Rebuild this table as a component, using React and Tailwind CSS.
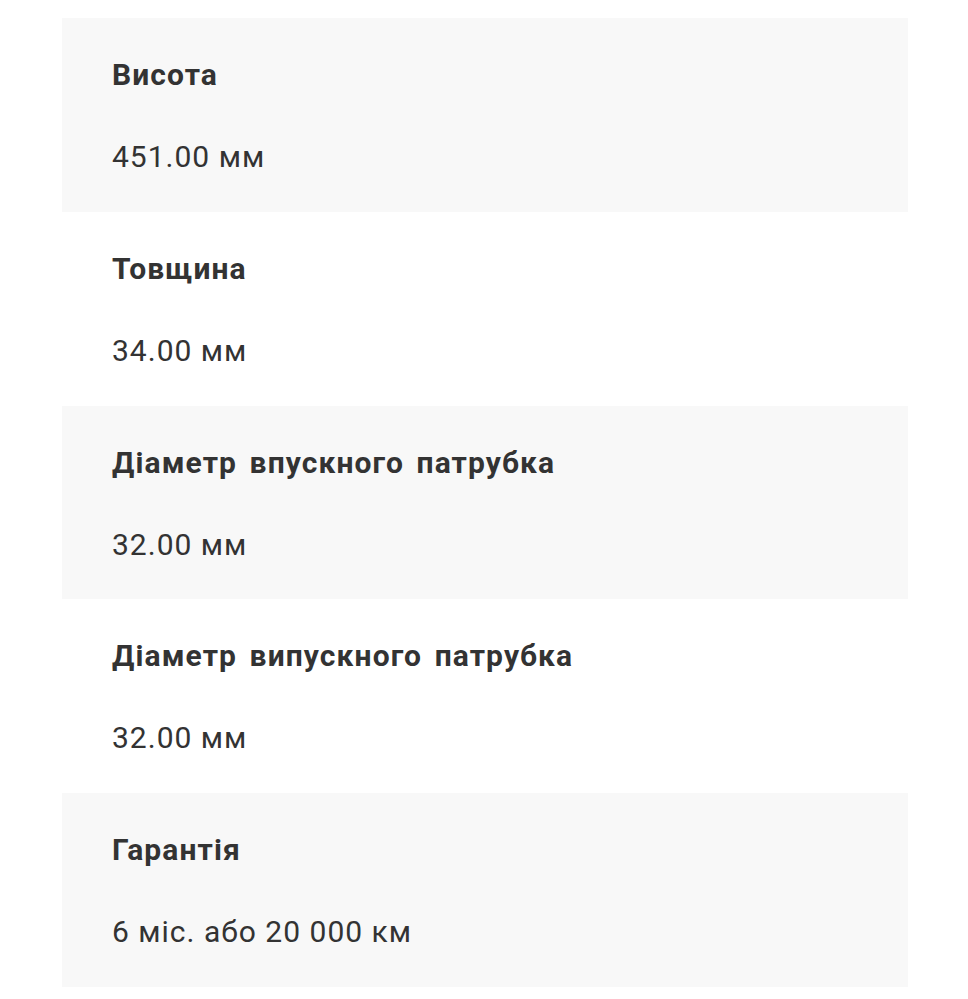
const specs = [
  { label: 'Висота', value: '451.00 мм' },
  { label: 'Товщина', value: '34.00 мм' },
  { label: 'Діаметр впускного патрубка', value: '32.00 мм' },
  { label: 'Діаметр випускного патрубка', value: '32.00 мм' },
  { label: 'Гарантія', value: '6 міс. або 20 000 км' },
]

export default function App() {
  return (
    <div className="min-h-[999px] bg-white pt-[18px] font-['Roboto',sans-serif] text-[#333333]">
      <div className="mx-[62px] w-[846px]">
        {specs.map((s, i) => (
          <div
            key={i}
            className={`h-[193.8px] px-[50px] pt-[37px] ${i % 2 === 0 ? 'bg-[#f8f8f8]' : 'bg-white'}`}
          >
            <div className="text-[30px] font-bold leading-[40px] tracking-[1.1px] [word-spacing:4px]">{s.label}</div>
            <div className="mt-[42px] text-[30px] leading-[40px] tracking-[1px]">{s.value}</div>
          </div>
        ))}
      </div>
    </div>
  )
}
